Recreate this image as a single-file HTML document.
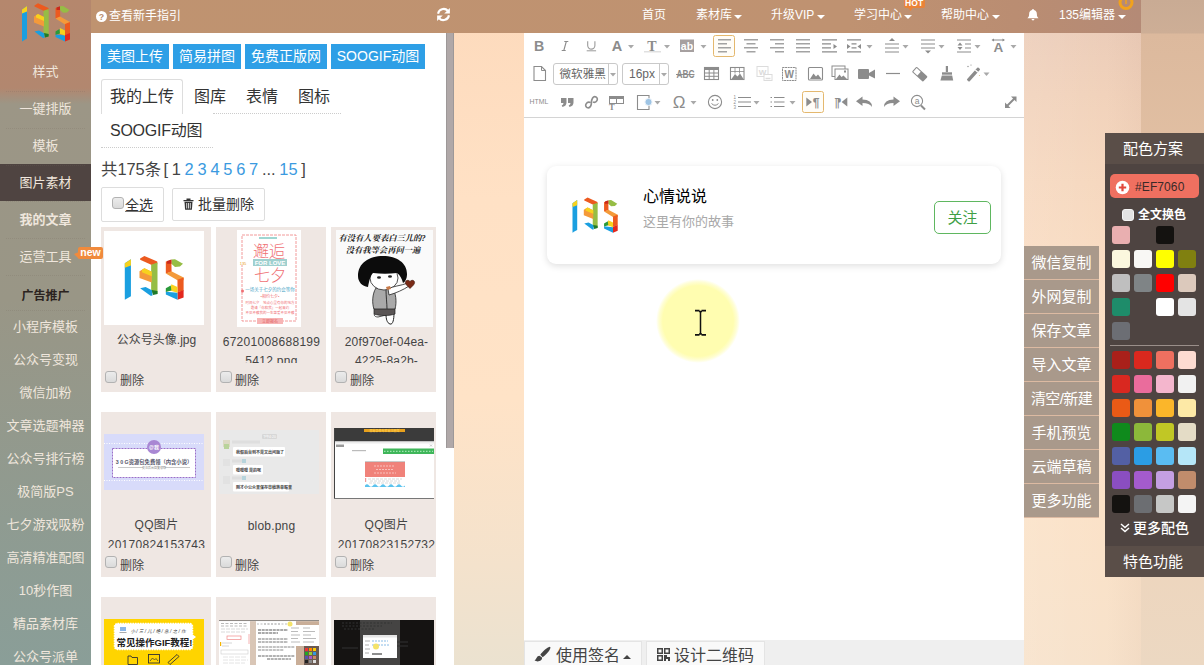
<!DOCTYPE html>
<html lang="zh-CN">
<head>
<meta charset="utf-8">
<title>135编辑器</title>
<style>
*{box-sizing:border-box;margin:0;padding:0}
html,body{width:1204px;height:665px;overflow:hidden}
body{font-family:"Liberation Sans","Noto Sans CJK SC",sans-serif;font-size:14px;color:#333;position:relative;
 background:linear-gradient(180deg,#fddabc 0%,#ffe1c5 30%,#ffe3c7 60%,#f4e2cc 85%,#ebe2d0 100%);}
.abs{position:absolute}
/* right-most strip */
#rstrip{left:1141px;top:0;width:63px;height:665px;background:linear-gradient(180deg,#c9ab94 0,#cdae96 33px,#dcb99d 34px,#e6c5a8 40%,#eed4bb 75%,#ecd8c2 100%)}
/* sidebar */
#side{left:0;top:0;width:91px;height:665px;background:linear-gradient(180deg,#b5876d 0,#b2876f 88px,#9c9686 104px,#999686 300px,#8f9b91 520px,#8a9e98 665px)}
#side .it{position:absolute;left:0;width:91px;text-align:center;color:#efe6dc;font-size:13px;line-height:20px;white-space:nowrap}
#side .it.s{font-size:15px}
#side .act{position:absolute;left:0;top:164px;width:91px;height:37px;background:#4f4441}
/* topbar */
#top{left:91px;top:0;width:1050px;height:33px;background:linear-gradient(90deg,#bf9370 0,#bf9271 72%,#ba8d72 88%,#b48a76 100%)}
#top .t{position:absolute;top:6px;color:#fff;font-size:12px;line-height:18px;white-space:nowrap}
.caret{display:block;width:0;height:0;border-left:4px solid transparent;border-right:4px solid transparent;border-top:4px solid #fff;margin:0}
/* left panel */
#lp{left:91px;top:33px;width:363.400px;height:632px;background:#fff;overflow:hidden}
#sb{left:446px;top:33px;width:8.400px;height:414.500px;background:#b0a8a8;border-left:1px solid #9d9898;border-right:1px solid #9d9898}
.bbtn{position:absolute;height:25px;background:#2e9fe6;color:#fff;font-size:14px;line-height:25px;text-align:center;white-space:nowrap}
.lk{color:#3a9ae0}
.tab{position:absolute;font-size:16px;line-height:22px;color:#333;white-space:nowrap}
.card{position:absolute;width:110px;height:165px;background:#efe7e3;overflow:hidden}
.card .im{position:absolute;left:3px;top:2.500px;width:100px;height:97px;overflow:hidden}
.card .nm{position:absolute;left:-7.500px;top:103.500px;width:126px;height:32px;overflow:hidden;text-align:center;font-size:12px;line-height:19px;color:#444;white-space:nowrap}
.card .del{position:absolute;left:19px;top:146px;font-size:12px;line-height:16px;color:#444}
.cb{position:absolute;width:12px;height:12px;border:1px solid #b2b2b2;border-radius:3px;background:linear-gradient(#ececec,#dadada)}
/* editor */
#ed{left:524px;top:33px;width:500px;height:632px;background:#fff}
#edbot{left:524px;top:640px;width:500px;height:25px;background:#efefef}
/* right buttons */
.rb{position:absolute;left:1024px;width:75px;height:34px;border-bottom:1px solid #dcbaa2;background:#a9998b;color:#fff;font-size:15px;line-height:33px;text-align:center;white-space:nowrap}
/* color panel */
#cp{left:1105px;top:133px;width:99px;height:444px;background:#4e4441}
.sw{position:absolute;width:18px;height:18px;border-radius:3px}
</style>
</head>
<body>
<div class="abs" style="left:1024px;top:33px;width:117px;height:632px;background:linear-gradient(90deg,rgba(255,255,255,.10),rgba(255,255,255,0) 70%,rgba(160,110,90,.06)),linear-gradient(180deg,#eccdb9 0,#f1d2bb 60px,#f6d8bf 150px,#fbdfc5 290px,#fbe2c8 480px,#f7e2cb 632px)"></div>
<div id="rstrip" class="abs"></div>
<div id="side" class="abs">
 <div class="act"></div>
 <svg class="abs" style="left:10px;top:0" width="80" height="50" viewBox="10 0 80 50">
  <polygon points="22,9.500 27,6 27,38.500 24.500,40 22,41.500" fill="#1a9fe0"/><polygon points="22,9.500 27,6 27,11.500 22,13.500" fill="#f7d21d"/>
  <polygon points="34.500,5.500 38,3.200 48.500,8 48.500,10.500 44,11 34.500,6.500" fill="#ec5a1f"/>
  <polygon points="43.500,10.800 48.700,9 48.700,36.500 43.500,35" fill="#96bd45"/>
  <polygon points="34,16.500 38,14 44,17 44,26.500 34,22.500" fill="#f49a3a"/><polygon points="38,14 44,17 44,21 36,17.500 36,15.300" fill="#f7d21d"/>
  <polygon points="34.500,31.500 39,30.500 44.500,33.500 44.500,38 43,38" fill="#1a9fe0"/>
  <polygon points="44,33 48.700,34 48.700,36.500 45,37.500" fill="#1f7a2a"/>
  <polygon points="60,6.200 63,6 69.500,10 67,12.500 63,12.800 60,10" fill="#96bd45"/>
  <polygon points="55.500,8 60,7 60.200,17 55.500,18.500" fill="#ec5a1f"/><polygon points="56.500,7.500 60,6.200 60,10 56.500,10" fill="#c9281c"/>
  <polygon points="55.500,18.500 60,16.500 70,22 70,24.500 65,24.500" fill="#f49a3a"/>
  <polygon points="65,24 70,22 70,33.500 65,35" fill="#ec5a1f"/>
  <polygon points="65,35 70,33 70,39.500 65,41.500" fill="#e3281e"/>
  <polygon points="55.500,34.500 65,35.500 65,41.500 55.500,37" fill="#1a9fe0"/>
  <polygon points="60,28 65,30.500 65,35.500 59,33.500" fill="#f7d21d"/>
  <polygon points="55.500,31.500 59.500,29 60,33.500 55.500,34.800" fill="#2a9a3a"/>
 </svg>
 <div class="it" style="top:62px;">样式</div>
 <div class="it" style="top:99px;">一键排版</div>
 <div class="it" style="top:136px;">模板</div>
 <div class="it" style="top:173px;">图片素材</div>
 <div class="it" style="top:210px;font-weight:bold;">我的文章</div>
 <div class="it" style="top:247px;">运营工具</div>
 <div class="it" style="top:286px;font-size:12px;font-weight:bold;color:#2b2320">广告推广</div>
 <div class="it" style="top:317px">小程序模板</div>
 <div class="it" style="top:350px">公众号变现</div>
 <div class="it" style="top:383px">微信加粉</div>
 <div class="it" style="top:416px">文章选题神器</div>
 <div class="it" style="top:449px">公众号排行榜</div>
 <div class="it" style="top:482px">极简版PS</div>
 <div class="it" style="top:515px">七夕游戏吸粉</div>
 <div class="it" style="top:548px">高清精准配图</div>
 <div class="it" style="top:581px">10秒作图</div>
 <div class="it" style="top:614px">精品素材库</div>
 <div class="it" style="top:647px">公众号派单</div>
 <div class="abs" style="left:6px;top:91px;width:79px;border-top:1px dotted rgba(120,105,95,.22)"></div>
 <div class="abs" style="left:6px;top:128px;width:79px;border-top:1px dotted rgba(120,105,95,.22)"></div>
 <div class="abs" style="left:6px;top:165px;width:79px;border-top:1px dotted rgba(120,105,95,.22)"></div>
 <div class="abs" style="left:6px;top:201px;width:79px;border-top:1px dotted rgba(120,105,95,.22)"></div>
 <div class="abs" style="left:6px;top:238px;width:79px;border-top:1px dotted rgba(120,105,95,.22)"></div>
 <div class="abs" style="left:6px;top:275px;width:79px;border-top:1px dotted rgba(120,105,95,.22)"></div>
 <div class="abs" style="left:6px;top:310px;width:79px;border-top:1px dotted rgba(120,105,95,.22)"></div>
</div>
<div id="top" class="abs">
 <svg class="abs" style="left:5px;top:10.500px" width="11" height="11" viewBox="0 0 10 10"><circle cx="5" cy="5" r="5" fill="#fff"/><text x="5" y="8.2" font-size="8" font-weight="bold" font-family="Liberation Sans,sans-serif" text-anchor="middle" fill="#b98d70">?</text></svg>
 <div class="t" style="left:18px;top:6.500px;font-size:12px">查看新手指引</div>
 <svg class="abs" style="left:345px;top:7px" width="15" height="15" viewBox="0 0 16 16"><path d="M2.2 7.2A6 6 0 0 1 12.6 4" fill="none" stroke="#fff" stroke-width="2.2"/><polygon points="14.8,1 14.8,7 8.8,7" fill="#fff"/><path d="M13.8 8.8A6 6 0 0 1 3.4 12" fill="none" stroke="#fff" stroke-width="2.2"/><polygon points="1.2,15 1.2,9 7.2,9" fill="#fff"/></svg>
 <div class="t" style="left:551px">首页</div>
 <div class="t" style="left:605px">素材库</div><span class="caret abs" style="left:643px;top:15px"></span>
 <div class="t" style="left:680px">升级VIP</div><span class="caret abs" style="left:726px;top:15px"></span>
 <div class="t" style="left:763px">学习中心</div><span class="caret abs" style="left:813px;top:15px"></span>
 <div class="t" style="left:850px">帮助中心</div><span class="caret abs" style="left:901px;top:15px"></span>
 <svg class="abs" style="left:936px;top:8px" width="12" height="14" viewBox="0 0 14 15"><path d="M7 0.5c.7 0 1.1.5 1.1 1.1C10.400 2.200 11.500 4 11.500 6.200c0 3 1 4 2 5H0.500c1-1 2-2 2-5C2.500 4 3.600 2.200 5.900 1.600 5.900 1 6.300.5 7 .5z" fill="#fff"/><path d="M5.300 12.300a1.700 1.700 0 0 0 3.400 0z" fill="#fff"/></svg>
 <div class="t" style="left:968px">135编辑器</div><span class="caret abs" style="left:1027px;top:15px"></span>
 <div class="abs" style="left:812.500px;top:-1px;width:21.500px;height:8.500px;background:#ea8338;color:#fff;font-size:8.500px;line-height:9px;font-weight:bold;text-align:center;border-radius:2px;letter-spacing:.2px">HOT</div>
 <div class="abs" style="left:817px;top:7px;width:0;height:0;border-left:2px solid transparent;border-top:4.500px solid #ea8338;border-right:4px solid transparent;transform:skewX(20deg)"></div>
 <svg class="abs" style="left:1027px;top:0" width="16" height="12" viewBox="0 0 16 12"><circle cx="8" cy="2.500" r="6" fill="none" stroke="#f2a21c" stroke-width="3"/><path d="M8 0v4" stroke="#f2a21c" stroke-width="1.500"/></svg>
</div>
<div id="lp" class="abs">
 <div class="bbtn" style="left:10px;top:11px;width:68px">美图上传</div>
 <div class="bbtn" style="left:82px;top:11px;width:68px">简易拼图</div>
 <div class="bbtn" style="left:154px;top:11px;width:82px">免费正版网</div>
 <div class="bbtn" style="left:240px;top:11px;width:94px">SOOGIF动图</div>

 <div class="abs" style="left:10px;top:46px;width:82px;height:35px;border:1px solid #ddd;border-bottom:none;border-radius:3px 3px 0 0"></div>
 <div class="abs" style="left:122px;top:80px;width:128px;border-top:1px dotted #ccc"></div>
 <div class="abs" style="left:10px;top:114px;width:112px;border-top:1px dotted #ccc"></div>
 <div class="tab" style="left:19px;top:53px">我的上传</div>
 <div class="tab" style="left:103px;top:53px">图库</div>
 <div class="tab" style="left:155px;top:53px">表情</div>
 <div class="tab" style="left:207px;top:53px">图标</div>
 <div class="tab" style="left:19px;top:87px;letter-spacing:-.25px">SOOGIF动图</div>

 <div class="abs" style="left:10px;top:125px;font-size:16.400px;line-height:22px;color:#444;white-space:nowrap;word-spacing:-.8px">共175条<span style="margin-left:-1.500px"> </span>[ 1 <span class="lk">2</span> <span class="lk">3</span> <span class="lk">4</span> <span class="lk">5</span> <span class="lk">6</span> <span class="lk">7</span> ... <span class="lk">15</span> ]</div>

 <div class="abs" style="left:10px;top:154px;width:63px;height:35px;border:1px solid #ddd;border-radius:2px"></div>
 <div class="cb" style="left:21px;top:164px"></div>
 <div class="abs" style="left:34px;top:162px;font-size:14px;line-height:20px;color:#333;text-decoration:underline;text-decoration-color:#777">全选</div>
 <div class="abs" style="left:81px;top:155px;width:93px;height:33px;border:1px solid #ddd;border-radius:2px"></div>
 <svg class="abs" style="left:92px;top:165px" width="11" height="12" viewBox="0 0 11 12"><path d="M0.500 2h10v1.300H0.500zM3.500 0.500h4v1.500h-4z" fill="#333"/><path d="M1.500 3.800h8l-.6 8H2.100z" fill="#333"/><path d="M3.700 5v5.500M5.500 5v5.500M7.300 5v5.500" stroke="#fff" stroke-width=".8"/></svg>
 <div class="abs" style="left:107px;top:161px;font-size:14px;line-height:20px;color:#333">批量删除</div>
<div class="card" style="left:10px;top:194px;width:110px"><div class="im"><svg width="100" height="94" viewBox="0 0 100 94" style="position:absolute;left:0;top:1.500px;background:#fff"><g transform="translate(20.800,25) scale(1.225,1.140) translate(-22,-3.200)"><polygon points="22,9.500 27,6 27,38.500 24.500,40 22,41.500" fill="#1a9fe0"/><polygon points="22,9.500 27,6 27,11.500 22,13.500" fill="#f7d21d"/>
  <polygon points="34.500,5.500 38,3.200 48.500,8 48.500,10.500 44,11 34.500,6.500" fill="#ec5a1f"/>
  <polygon points="43.500,10.800 48.700,9 48.700,36.500 43.500,35" fill="#96bd45"/>
  <polygon points="34,16.500 38,14 44,17 44,26.500 34,22.500" fill="#f49a3a"/><polygon points="38,14 44,17 44,21 36,17.500 36,15.300" fill="#f7d21d"/>
  <polygon points="34.500,31.500 39,30.500 44.500,33.500 44.500,38 43,38" fill="#1a9fe0"/>
  <polygon points="44,33 48.700,34 48.700,36.500 45,37.500" fill="#1f7a2a"/>
  <polygon points="60,6.200 63,6 69.500,10 67,12.500 63,12.800 60,10" fill="#96bd45"/>
  <polygon points="55.500,8 60,7 60.200,17 55.500,18.500" fill="#ec5a1f"/><polygon points="56.500,7.500 60,6.200 60,10 56.500,10" fill="#c9281c"/>
  <polygon points="55.500,18.500 60,16.500 70,22 70,24.500 65,24.500" fill="#f49a3a"/>
  <polygon points="65,24 70,22 70,33.500 65,35" fill="#ec5a1f"/>
  <polygon points="65,35 70,33 70,39.500 65,41.500" fill="#e3281e"/>
  <polygon points="55.500,34.500 65,35.500 65,41.500 55.500,37" fill="#1a9fe0"/>
  <polygon points="60,28 65,30.500 65,35.500 59,33.500" fill="#f7d21d"/>
  <polygon points="55.500,31.500 59.500,29 60,33.500 55.500,34.800" fill="#2a9a3a"/></g></svg></div><div class="nm" style="">公众号头像.jpg</div><div class="cb" style="left:4px;top:144px"></div><div class="del">删除</div></div>
<div class="card" style="left:125px;top:194px;width:110px"><div class="im"><svg width="64" height="97" viewBox="0 0 64 97" style="position:absolute;left:18px;top:0;background:#fff">
<rect x="5" y="5" width="54" height="86" fill="none" stroke="#f29a9a" stroke-width="1" stroke-dasharray="3 1"/>
<rect x="22" y="7" width="18" height="2" fill="#9fd6d2"/>
<text x="32" y="27" font-size="16" font-weight="300" text-anchor="middle" fill="#ef6f74" font-family="Liberation Sans,Noto Sans CJK SC,sans-serif">邂逅</text>
<rect x="16" y="29" width="34" height="7" fill="#9fd0cf"/>
<text x="33" y="35" font-size="6" text-anchor="middle" fill="#fff" font-family="Liberation Sans,sans-serif" font-weight="bold">FOR LOVE</text>
<text x="33" y="51" font-size="16" font-weight="300" text-anchor="middle" fill="#ef6f74" font-family="Liberation Sans,Noto Sans CJK SC,sans-serif">七夕</text>
<rect x="3" y="30" width="6" height="5" fill="#fff"/><text x="6" y="34.500" font-size="4" text-anchor="middle" fill="#e9a21c" font-family="Liberation Sans,sans-serif">135</text>
<text x="33" y="61" font-size="4.500" text-anchor="middle" fill="#4aa6c8" font-family="Liberation Sans,Noto Sans CJK SC,sans-serif">一场关于七夕的约会等你</text>
<text x="33" y="68" font-size="4" text-anchor="middle" fill="#ef6f74" font-family="Liberation Sans,Noto Sans CJK SC,sans-serif">•相约七夕•</text>
<text x="33" y="74" font-size="3.500" text-anchor="middle" fill="#ef6f74" font-family="Liberation Sans,Noto Sans CJK SC,sans-serif">时间七夕　地点心里有你的地方</text>
<text x="33" y="79" font-size="3.500" text-anchor="middle" fill="#ef6f74" font-family="Liberation Sans,Noto Sans CJK SC,sans-serif">邀请「你和我」一起来约</text>
<text x="33" y="84" font-size="3.500" text-anchor="middle" fill="#ef6f74" font-family="Liberation Sans,Noto Sans CJK SC,sans-serif">不见不散我的一生挚爱不见不散</text>
<rect x="20" y="88" width="26" height="6" fill="#f7b5b5"/><text x="33" y="92.500" font-size="4" text-anchor="middle" fill="#e05d62" font-family="Liberation Sans,Noto Sans CJK SC,sans-serif">立即报名</text>
<circle cx="5.500" cy="61" r="1.500" fill="#ef6f74"/>
</svg></div><div class="nm" style="letter-spacing:.3px;padding-top:2px">67201008688199<br>5412.png</div><div class="cb" style="left:4px;top:144px"></div><div class="del">删除</div></div>
<div class="card" style="left:240px;top:194px;width:105px"><div class="im"><svg width="97" height="97" viewBox="0 0 97 97" style="position:absolute;left:2px;top:0;background:#fafafa">
<text x="46" y="10.800" font-size="8.300" font-weight="bold" text-anchor="middle" fill="#1a1a1a" font-style="italic" font-family="Liberation Serif,Noto Serif CJK SC,serif">有没有人要表白三儿的?</text>
<text x="47" y="22.800" font-size="8.300" font-weight="bold" text-anchor="middle" fill="#1a1a1a" font-style="italic" font-family="Liberation Serif,Noto Serif CJK SC,serif">没有我等会再问一遍</text>
<path d="M50 84c0 5 1 9 4 10s4-5 4-11z" fill="#fff" stroke="#222" stroke-width="1"/>
<path d="M40 82c-3 2-2 5 2 5l8-2z" fill="#fff" stroke="#222" stroke-width=".8"/>
<path d="M38 78h21v6c-6 2-15 2-21 0z" fill="#5a5555" stroke="#222" stroke-width=".7"/>
<path d="M40 58c-4 6-4 16-2 21h21c2-7 1-16-3-22z" fill="#a9a9a9" stroke="#222" stroke-width=".8"/>
<path d="M50 60c0 6 1 14 1 19" stroke="#333" stroke-width="1" fill="none"/>
<ellipse cx="48" cy="48" rx="14" ry="12" fill="#fff" stroke="#222" stroke-width=".8"/>
<path d="M22 46c0-13 11-20 25-20s24 7 24 18c0 5-2 8-4 9-1-4-3-8-6-10-8 1-16 1-24 0-3 3-4 9-5 14-6-1-10-5-10-11z" fill="#0c0c0c"/>
<ellipse cx="43" cy="47.500" rx="2" ry="1.200" fill="#222"/><ellipse cx="54" cy="46.500" rx="2" ry="1.200" fill="#222"/>
<path d="M52 59c5-3 12-3 20-6l1 3c-6 4-13 7-20 9z" fill="#fff" stroke="#222" stroke-width=".8"/>
<path d="M50 57l4-1 1 3-4 1z" fill="#c77a4a"/>
<path d="M74 51.500c-2.500-3-6.500 0-3.500 3.500l3.500 3.500 3.500-3.500c3-3.500-1-6.500-3.500-3.500z" fill="#7a2a16" stroke="#3a1208" stroke-width=".6"/>
</svg></div><div class="nm" style="padding-top:2px;letter-spacing:.15px">20f970ef-04ea-<br>4225-8a2b-</div><div class="cb" style="left:4px;top:144px"></div><div class="del">删除</div></div>
<div class="card" style="left:10px;top:379px;width:110px"><div class="im"><svg width="100" height="56" viewBox="0 0 100 56" style="position:absolute;left:0;top:19.500px;background:#d8dbfa">
<path d="M0 9.500h100M0 46.500h100" stroke="#fff" stroke-width="1" stroke-dasharray="1 1.500"/>
<rect x="8.500" y="14.500" width="83" height="29" fill="#fff" stroke="#9a6fc9" stroke-width="1" stroke-dasharray="2 1"/>
<circle cx="50" cy="13" r="7" fill="#a987d3"/>
<text x="50" y="15.300" font-size="5" font-weight="bold" text-anchor="middle" fill="#fff" font-family="Liberation Sans,Noto Sans CJK SC,sans-serif">@我</text>
<text x="50" y="29.500" font-size="5.300" font-weight="bold" text-anchor="middle" fill="#55556a" font-family="Liberation Sans,Noto Sans CJK SC,sans-serif">3 0 G资源包免费领（内含小说）</text>
<path d="M14 33.500h72" stroke="#bbb" stroke-width=".8"/>
<rect x="39" y="32" width="22" height="3" fill="#fff"/>
<text x="50" y="35" font-size="3" text-anchor="middle" fill="#888" font-family="Liberation Sans,Noto Sans CJK SC,sans-serif">关注后台回复领取</text>
</svg></div><div class="nm" style="letter-spacing:.3px">QQ图片<br><span style="position:relative;top:1.500px">20170824153743</span></div><div class="cb" style="left:4px;top:144px"></div><div class="del">删除</div></div>
<div class="card" style="left:125px;top:379px;width:110px"><div class="im"><svg width="101" height="64" viewBox="0 0 101 64" style="position:absolute;left:-0.500px;top:15.700px;background:#e9e9e9">
<rect x="43" y="4" width="15" height="5" rx="1" fill="#d7d7d7"/><text x="50.500" y="8" font-size="3.500" text-anchor="middle" fill="#fff" font-family="Liberation Sans,sans-serif">下午4:20</text>
<rect x="4" y="10" width="7" height="7" fill="#dcd9c3"/><rect x="5" y="14" width="5" height="5" fill="#b9d39a"/><rect x="13" y="10.500" width="28" height="3" fill="#dedede"/>
<rect x="14" y="17" width="52" height="9.500" rx="1" fill="#fff"/>
<text x="17" y="24" font-size="4" fill="#444" font-family="Liberation Sans,Noto Sans CJK SC,sans-serif" font-weight="bold">我假后台到不是又出问题了</text>
<rect x="4" y="29" width="7" height="7" fill="#e2e2e2"/><rect x="13" y="29.500" width="10" height="3" fill="#dedede"/><rect x="23" y="29" width="4" height="4" fill="#b7d4dc"/>
<rect x="14" y="35" width="30" height="9.500" rx="1" fill="#fff"/>
<text x="17" y="42" font-size="4" fill="#444" font-family="Liberation Sans,Noto Sans CJK SC,sans-serif" font-weight="bold">嗯嗯嗯 是的呢</text>
<rect x="4" y="46" width="7" height="8" fill="#e2e2e2"/><rect x="13" y="46.500" width="10" height="3" fill="#dedede"/><rect x="23" y="46" width="4" height="4" fill="#b7d4dc"/>
<rect x="14" y="52" width="56" height="9.500" rx="1" fill="#fff"/>
<text x="17" y="59" font-size="4" fill="#444" font-family="Liberation Sans,Noto Sans CJK SC,sans-serif" font-weight="bold">刚才小公众里保存草稿落单服里</text>
</svg></div><div class="nm" style="padding-top:1.500px;letter-spacing:.2px">blob.png</div><div class="cb" style="left:4px;top:144px"></div><div class="del">删除</div></div>
<div class="card" style="left:240px;top:379px;width:105px"><div class="im"><svg width="100" height="71" viewBox="0 0 100 71" style="position:absolute;left:0;top:13px;background:#fff">
<rect x="0" y="0" width="100" height="13.500" fill="#3b3b3b"/>
<rect x="30" y="1" width="41" height="3" fill="#e8a11d"/>
<text x="50.500" y="3.700" font-size="3" text-anchor="middle" fill="#ffd45a" font-family="Liberation Sans,Noto Sans CJK SC,sans-serif">屏幕录像专家未注册版</text>
<rect x="0" y="13.500" width="100" height="2" fill="#ececec"/>
<rect x="0" y="0" width="1" height="71" fill="#444"/><rect x="0" y="70" width="100" height="1" fill="#777"/>
<rect x="2" y="16.500" width="8" height="2.500" fill="#999"/><path d="M96 16.500l2 2m0-2l-2 2" stroke="#999" stroke-width=".5"/>
<rect x="18" y="22" width="14" height="1.200" fill="#bbb"/>
<rect x="49" y="20.500" width="51" height="5.500" fill="#3fb65a"/>
<path d="M50 23.300h49" stroke="#9fe3ae" stroke-width="1.200" stroke-dasharray="1.500 1.500"/>
<rect x="31" y="34" width="40" height="15" fill="#f0827a"/>
<path d="M40 38h20M42 41.500h17M40 45h22" stroke="#f9c0bb" stroke-width="1.200" stroke-dasharray="2 1"/>
<rect x="31" y="33.500" width="40" height=".6" fill="#999"/>
<path d="M34 51h34M36 53h30M35 55h32" stroke="#d6d6d6" stroke-width=".9" stroke-dasharray="3 1"/>
<rect x="31" y="50" width="1.200" height="4" fill="#e99"/>
<path d="M31 57.500q2-2.500 4 0t4 0 4 0 4 0 4 0 4 0 4 0 4 0 4 0 4 0v1.500h-40z" fill="#5bc3ee"/>
</svg></div><div class="nm" style="letter-spacing:.3px">QQ图片<br><span style="position:relative;top:1.500px">20170823152732</span></div><div class="cb" style="left:4px;top:144px"></div><div class="del">删除</div></div>
<div class="card" style="left:10px;top:564px;width:110px"><div class="im"><svg width="100" height="46" viewBox="0 0 100 46" style="position:absolute;left:0;top:19.500px;background:#ffd400">
<rect x="10.500" y="4.500" width="78" height="26" rx="3" fill="#fff" stroke="#fff" stroke-width="1.500" stroke-dasharray="1.500 1"/>
<polygon points="88,15 92,18 88,21" fill="#fff"/>
<rect x="16" y="8" width="6" height="4" fill="#8ab6e8"/><rect x="15.500" y="13" width="7" height="1" fill="#aaa"/>
<text x="54" y="13.500" font-size="4.600" text-anchor="middle" fill="#333" font-style="italic" font-family="Liberation Sans,Noto Sans CJK SC,sans-serif">小 / 三 / 儿 / 绝 / 急 / 之 / 作</text>
<text x="50.500" y="27" font-size="9.500" font-weight="bold" text-anchor="middle" fill="#222" font-family="Liberation Sans,Noto Sans CJK SC,sans-serif">常见操作GIF教程!</text>
<path d="M24 37h3l1 1.500h5.500v7h-9.500z" fill="none" stroke="#333" stroke-width=".9"/>
<rect x="44.500" y="35.500" width="11" height="8.500" fill="none" stroke="#333" stroke-width=".9"/><path d="M46 42l2.500-3 2 2 1.500-1.500 2 2.500" fill="none" stroke="#333" stroke-width=".7"/>
<path d="M64 43.500l9-8 2 2-9 8z" fill="none" stroke="#333" stroke-width=".9"/>
</svg></div></div>
<div class="card" style="left:125px;top:564px;width:110px"><div class="im"><svg width="101" height="46" viewBox="0 0 101 46" style="position:absolute;left:-0.500px;top:20.500px;background:#fdfdfd">
<rect x="0" y="0" width="101" height="1.200" fill="#8f8a86"/>
<rect x="0" y="1.200" width="31" height="45" fill="#fff"/>
<path d="M2 3.500h26M2 6h26" stroke="#b9b9b9" stroke-width="1" stroke-dasharray="3 1.500"/>
<path d="M2 9h27M2 12h24" stroke="#cfcfcf" stroke-width=".8" stroke-dasharray="4 1"/>
<rect x="8" y="16" width="14" height="3.500" fill="none" stroke="#f08a8a" stroke-width=".7"/>
<path d="M30 14v10" stroke="#f3a0a0" stroke-width=".8"/>
<rect x="1" y="22" width="1.200" height="4" fill="#f5b400"/>
<path d="M3 23h10M3 26h7" stroke="#ccc" stroke-width=".8"/>
<rect x="2" y="30" width="27" height="4" fill="none" stroke="#ccc" stroke-width=".6"/>
<path d="M4 37h24M4 40h25M4 43h22" stroke="#ddd" stroke-width=".8" stroke-dasharray="5 1"/>
<rect x="31" y="1.200" width="6" height="45" fill="#d9c6b6"/>
<rect x="37" y="1.200" width="40" height="45" fill="#fff"/>
<path d="M38 4h24M45 4h25" stroke="#bbb" stroke-width="1" stroke-dasharray="2 1.500"/>
<path d="M39 10h36M39 13h20" stroke="#555" stroke-width="1.100" stroke-dasharray="3 .7"/>
<path d="M39 19h37M39 22h30" stroke="#777" stroke-width="1" stroke-dasharray="3 .7"/>
<path d="M39 27h37M39 30h26" stroke="#888" stroke-width="1" stroke-dasharray="3 .7"/>
<path d="M39 36h37M48 39h24" stroke="#666" stroke-width="1" stroke-dasharray="3 .7"/>
<rect x="77" y="1.200" width="24" height="45" fill="#c9ae98"/>
<rect x="85" y="26" width="16" height="20" fill="#6b5a52"/>
<rect x="69" y="5" width="31" height="21" fill="#fff"/>
<path d="M72 8h8M72 11.500h7M72 15h9M72 18.500h7M72 22h9M84 8h7M84 11.500h12M84 15h8M84 18.500h13M84 22h11" stroke="#aaa" stroke-width=".8"/>
<circle cx="71" cy="4" r="2.500" fill="#f4e36a"/>
<g><rect x="86" y="28" width="3" height="3" fill="#e33"/><rect x="90" y="28" width="3" height="3" fill="#f80"/><rect x="94" y="28" width="3" height="3" fill="#fc0"/>
<rect x="86" y="32" width="3" height="3" fill="#2a2"/><rect x="90" y="32" width="3" height="3" fill="#9c3"/><rect x="94" y="32" width="3" height="3" fill="#39d"/>
<rect x="86" y="36" width="3" height="3" fill="#55a"/><rect x="90" y="36" width="3" height="3" fill="#a5c"/><rect x="94" y="36" width="3" height="3" fill="#c86"/>
<rect x="86" y="40" width="3" height="3" fill="#222"/><rect x="90" y="40" width="3" height="3" fill="#888"/><rect x="94" y="40" width="3" height="3" fill="#ddd"/></g>
</svg></div></div>
<div class="card" style="left:240px;top:564px;width:105px"><div class="im"><svg width="100" height="46" viewBox="0 0 100 46" style="position:absolute;left:0;top:20.500px;background:#151312">
<rect x="26" y="0" width="40" height="46" fill="#454443"/>
<path d="M8 3h50M8 6h40M10 9h30" stroke="#333" stroke-width="1" stroke-dasharray="2 1.500"/>
<path d="M60 22h14M60 26h14M8 28h16" stroke="#333" stroke-width="1"/>
<rect x="29" y="15" width="34" height="23" fill="#fff"/>
<rect x="29" y="15" width="34" height="2.500" fill="#e6e6e6"/>
<path d="M31 21h5M31 25h4M31 29h5M31 33h4" stroke="#999" stroke-width=".8"/>
<path d="M38 21h16M38 25h18" stroke="#6aa9e0" stroke-width=".8" stroke-dasharray="2 1"/>
<circle cx="42" cy="26.500" r="3" fill="#f4e36a"/>
<path d="M38 34h10" stroke="#444" stroke-width="1.200"/>
</svg></div></div>
</div>
<div id="sb" class="abs"></div>
<div id="ed" class="abs"></div>
<svg class="abs" style="left:524px;top:33px" width="500" height="85" viewBox="524 33 500 85"><text x="534" y="50.800" font-size="14.200" font-weight="bold" fill="#8c8c8c" font-family="Liberation Sans,Noto Sans CJK SC,sans-serif">B</text><path d="M566.300 41.500L563.800 50.500M564.300 41.500h4M561.700 50.500h4" stroke="#8c8c8c" stroke-width="1.100" fill="none"/><path d="M587.700 41.300v4.200a3.600 3.600 0 0 0 7.200 0V41.300" fill="none" stroke="#9a9a9a" stroke-width="1.100"/><path d="M586.700 50.800h9.400" stroke="#9a9a9a" stroke-width="1"/><text x="611.800" y="50.800" font-size="14.500" font-weight="bold" fill="#8c8c8c" font-family="Liberation Sans,Noto Sans CJK SC,sans-serif">A</text><polygon points="628,45.0 634,45.0 631,48.5" fill="#a9a9a9"/><text x="647.300" y="50.600" font-size="14" font-weight="bold" fill="#8c8c8c" font-family="Liberation Serif,serif">T</text><path d="M644 51.800h17" stroke="#d8d8d8" stroke-width="1.200"/><polygon points="664,45.0 670,45.0 667,48.5" fill="#a9a9a9"/><rect x="680" y="39.500" width="14" height="12.500" fill="#a6a0a0"/><text x="687" y="50" font-size="10.500" font-weight="bold" text-anchor="middle" fill="#fff" font-family="Liberation Sans,Noto Sans CJK SC,sans-serif">ab</text><polygon points="700.5,45.0 706.5,45.0 703.5,48.5" fill="#a9a9a9"/><rect x="713.500" y="35.500" width="21" height="21" rx="2" fill="#fffdf8" stroke="#e4b86e" stroke-width="1"/><path d="M718 39.8H731" stroke="#8c8c8c" stroke-width="1.2"/><path d="M718 43.8H727" stroke="#8c8c8c" stroke-width="1.2"/><path d="M718 47.8H731" stroke="#8c8c8c" stroke-width="1.2"/><path d="M718 51.8H727" stroke="#8c8c8c" stroke-width="1.2"/><path d="M744 39.8H758" stroke="#8c8c8c" stroke-width="1.2"/><path d="M746.5 43.8H755.5" stroke="#8c8c8c" stroke-width="1.2"/><path d="M744 47.8H758" stroke="#8c8c8c" stroke-width="1.2"/><path d="M746.5 51.8H755.5" stroke="#8c8c8c" stroke-width="1.2"/><path d="M770 39.8H784" stroke="#8c8c8c" stroke-width="1.2"/><path d="M775 43.8H784" stroke="#8c8c8c" stroke-width="1.2"/><path d="M770 47.8H784" stroke="#8c8c8c" stroke-width="1.2"/><path d="M775 51.8H784" stroke="#8c8c8c" stroke-width="1.2"/><path d="M796 39.8H810" stroke="#8c8c8c" stroke-width="1.2"/><path d="M796 43.8H810" stroke="#8c8c8c" stroke-width="1.2"/><path d="M796 47.8H810" stroke="#8c8c8c" stroke-width="1.2"/><path d="M796 51.8H810" stroke="#8c8c8c" stroke-width="1.2"/><path d="M822 39.800h15M822 43.800h9M822 47.800h9M822 51.800h15" stroke="#8c8c8c" stroke-width="1.200"/><polygon points="833.500,44 837,46.500 833.500,49" fill="#8c8c8c"/><path d="M847 39.800h14M851.500 43.800h5M851.500 47.800h5M847 51.800h14" stroke="#8c8c8c" stroke-width="1.200"/><polygon points="847,44 850.500,46.500 847,49" fill="#8c8c8c"/><polygon points="861,44 857.500,46.500 861,49" fill="#8c8c8c"/><polygon points="866.5,45.0 872.5,45.0 869.5,48.5" fill="#a9a9a9"/><polygon points="889,41 895,41 892,38" fill="#8c8c8c"/><path d="M885 44h14M885 48h14M885 52h14" stroke="#8c8c8c" stroke-width="1.200"/><polygon points="902.5,45.0 908.5,45.0 905.5,48.5" fill="#a9a9a9"/><path d="M921 40h14M921 44h14M921 48h14" stroke="#8c8c8c" stroke-width="1.200"/><polygon points="925,50.500 931,50.500 928,53.500" fill="#8c8c8c"/><polygon points="938.5,45.0 944.5,45.0 941.5,48.5" fill="#a9a9a9"/><path d="M957 40h14M965 44h6M965 48h6M957 52h14" stroke="#8c8c8c" stroke-width="1.200"/><polygon points="957.500,45.500 962.500,45.500 960,42.500" fill="#8c8c8c"/><polygon points="957.500,47 962.500,47 960,50" fill="#8c8c8c"/><polygon points="974.5,45.0 980.5,45.0 977.5,48.5" fill="#a9a9a9"/><text x="998.300" y="52" font-size="13.500" font-weight="bold" text-anchor="middle" fill="#8c8c8c" font-family="Liberation Sans,Noto Sans CJK SC,sans-serif">A</text><path d="M992.500 40h11.500" stroke="#8c8c8c" stroke-width="1"/><polygon points="991.500,40 994,38.500 994,41.500" fill="#8c8c8c"/><polygon points="1005,40 1002.500,38.500 1002.500,41.500" fill="#8c8c8c"/><polygon points="1010.5,45.0 1016.5,45.0 1013.5,48.5" fill="#a9a9a9"/><path d="M534 66.500h7.500l4 4v10h-11.500z" fill="#fff" stroke="#8c8c8c" stroke-width="1.100"/><path d="M541.500 66.500v4h4" fill="none" stroke="#8c8c8c" stroke-width="1"/><rect x="553.500" y="63.500" width="64" height="21" rx="2.500" fill="#fff" stroke="#c9c9c9"/><path d="M608.500 64v20" stroke="#c9c9c9"/><text x="559.500" y="78.200" font-size="11.600" fill="#666" font-family="Liberation Sans,Noto Sans CJK SC,sans-serif">微软雅黑</text><polygon points="610,73.0 616,73.0 613,76.5" fill="#a9a9a9"/><rect x="622.500" y="63.500" width="46" height="21" rx="2.500" fill="#fff" stroke="#c9c9c9"/><path d="M659.500 64v20" stroke="#c9c9c9"/><text x="629" y="78.200" font-size="12" fill="#666" font-family="Liberation Sans,Noto Sans CJK SC,sans-serif">16px</text><polygon points="661,73.0 667,73.0 664,76.5" fill="#a9a9a9"/><text x="676.500" y="78.300" font-size="11" font-weight="bold" fill="#8c8c8c" textLength="18" lengthAdjust="spacingAndGlyphs" font-family="Liberation Sans,sans-serif">ABC</text><path d="M676 74.500h18.500" stroke="#8c8c8c" stroke-width="1"/><rect x="704.500" y="67.500" width="14" height="12" fill="#fff" stroke="#8c8c8c" stroke-width="1.100"/><rect x="704.500" y="67.500" width="14" height="2.500" fill="#8c8c8c"/><path d="M704.500 73h14M704.500 76.300h14M709.200 69v10.500M713.900 69v10.500" stroke="#8c8c8c" stroke-width="1"/><rect x="730.500" y="67.500" width="13.500" height="12" fill="#fff" stroke="#8c8c8c" stroke-width="1.100"/><path d="M730.500 71.500h13.500M735 67.500v6M739.500 67.500v6" stroke="#8c8c8c" stroke-width=".8"/><polygon points="731.500,79 735,74 737.500,76.500 740,73.500 743.500,79" fill="#8c8c8c"/><rect x="757" y="66.500" width="11" height="10" fill="#fff" stroke="#dcdcdc"/><text x="762.500" y="75" font-size="8" font-weight="bold" text-anchor="middle" fill="#dadada" font-family="Liberation Sans,Noto Sans CJK SC,sans-serif">W</text><rect x="764" y="74.500" width="8" height="6" fill="#fff" stroke="#dcdcdc"/><path d="M765.500 78.500h5" stroke="#dcdcdc" stroke-width="1.500"/><rect x="782.500" y="67.500" width="13.500" height="13" fill="#fff" stroke="#8c8c8c" stroke-width="1" stroke-dasharray="2 .6"/><text x="789.300" y="78" font-size="10" font-weight="bold" text-anchor="middle" fill="#8c8c8c" font-family="Liberation Sans,Noto Sans CJK SC,sans-serif">W</text><rect x="808.500" y="67.500" width="14" height="12.500" rx="1" fill="#fff" stroke="#8c8c8c" stroke-width="1.100"/><polygon points="810,79 813.500,73.500 816,76.500 818,74.500 821.500,79" fill="#8c8c8c"/><rect x="832" y="66" width="13" height="10.500" fill="#fff" stroke="#8c8c8c" stroke-width="1"/><rect x="835" y="69" width="13" height="10.500" fill="#fff" stroke="#8c8c8c" stroke-width="1"/><polygon points="836,79 839.500,74.500 841.500,77 843.500,75.500 847,79" fill="#8c8c8c"/><rect x="844" y="70.500" width="2" height="2" fill="#8c8c8c"/><rect x="858" y="69" width="11" height="10" rx="1" fill="#8c8c8c"/><polygon points="869,73 875,69.500 875,78.500 869,75.500" fill="#8c8c8c"/><path d="M886 73.500h14" stroke="#8c8c8c" stroke-width="1.200"/><g transform="rotate(42 920 74)"><rect x="912.500" y="70.800" width="15" height="7" rx="1" fill="#8c8c8c"/><rect x="913.500" y="71.800" width="5.500" height="5" fill="#fff"/></g><path d="M945.800 66h2.200v6h-2.200z" fill="#8c8c8c"/><path d="M942 72.300h10v2.400h-10z" fill="#8c8c8c"/><path d="M941.800 75.500h10.400l1 5h-12.800z" fill="#8c8c8c"/><g transform="rotate(-48 973.500 74.500)"><rect x="965" y="72.800" width="17" height="3.400" rx="1" fill="#8c8c8c"/><rect x="977.500" y="72.800" width="1.200" height="3.400" fill="#fff"/></g><circle cx="968" cy="66.500" r=".7" fill="#8c8c8c"/><circle cx="971" cy="65" r=".6" fill="#8c8c8c"/><circle cx="979.500" cy="75.500" r=".6" fill="#d7c08a"/><polygon points="983.5,72.5 989.5,72.5 986.5,76" fill="#a9a9a9"/><text x="529.500" y="104" font-size="6.900" fill="#8c8c8c" font-family="Liberation Sans,Noto Sans CJK SC,sans-serif">HTML</text><path d="M561 98h5.500v4.500q0 3.500-4 4.500l-.8-1.500q1.800-.8 1.800-2.500h-2.500zM568 98h5.500v4.500q0 3.500-4 4.500l-.8-1.500q1.800-.8 1.800-2.500h-2.500z" fill="#8c8c8c"/><path d="M590.500 102.500c-4-1.500-6.500 3.500-3.500 5 3.500 1.500 4.500-3 4.500-5.500s1.500-6.500 4.500-5c3 1.500 .5 6.500-3 5" fill="none" stroke="#8c8c8c" stroke-width="1.600"/><rect x="609.500" y="96.500" width="14" height="7" fill="#fff" stroke="#8c8c8c" stroke-width="1"/><rect x="609.500" y="96.500" width="14" height="2.500" fill="#8c8c8c"/><path d="M616.500 99v4.500" stroke="#8c8c8c"/><text x="609" y="110.300" font-size="8.500" font-weight="bold" fill="#8c8c8c" font-family="Liberation Serif,serif">T</text><path d="M637.500 95.500h11.500v14h-11.500z" fill="#fff" stroke="#8c8c8c" stroke-width="1.100"/><circle cx="648.500" cy="102" r="3.600" fill="#9ec4e4" stroke="#eef4fa" stroke-width="1"/><polygon points="654.5,101.0 660.5,101.0 657.5,104.5" fill="#a9a9a9"/><text x="679" y="107.600" font-size="17" text-anchor="middle" fill="#8c8c8c" font-family="Liberation Sans,sans-serif">Ω</text><polygon points="690.5,101.0 696.5,101.0 693.5,104.5" fill="#a9a9a9"/><circle cx="715" cy="102" r="6.600" fill="#fff" stroke="#8c8c8c" stroke-width="1.100"/><circle cx="712.700" cy="100" r=".9" fill="#8c8c8c"/><circle cx="717.300" cy="100" r=".9" fill="#8c8c8c"/><path d="M711.500 103.500q3.500 3.500 7 0" fill="none" stroke="#8c8c8c" stroke-width="1"/><path d="M738 97.500h13M738 102h13M738 106.500h13" stroke="#8c8c8c" stroke-width="1.200"/><text x="733.500" y="99" font-size="4.500" fill="#8c8c8c" font-family="Liberation Sans,Noto Sans CJK SC,sans-serif">1</text><text x="733.500" y="103.800" font-size="4.500" fill="#8c8c8c" font-family="Liberation Sans,Noto Sans CJK SC,sans-serif">2</text><text x="733.500" y="108.500" font-size="4.500" fill="#8c8c8c" font-family="Liberation Sans,Noto Sans CJK SC,sans-serif">3</text><polygon points="753.5,101.0 759.5,101.0 756.5,104.5" fill="#a9a9a9"/><path d="M774 97.500h10.500M774 102h10.500M774 106.500h10.500" stroke="#8c8c8c" stroke-width="1.200"/><path d="M770.500 97.500h1.500M770.500 102h1.500M770.500 106.500h1.500" stroke="#8c8c8c" stroke-width="1.200"/><polygon points="789.5,101.0 795.5,101.0 792.5,104.5" fill="#a9a9a9"/><rect x="802.500" y="91.500" width="21" height="21" rx="2" fill="#fffdf8" stroke="#e4b86e" stroke-width="1"/><polygon points="806.300,97.500 806.300,106.500 812,102" fill="#8c8c8c"/><text x="816" y="107" font-size="12" font-weight="bold" text-anchor="middle" fill="#8c8c8c" font-family="Liberation Sans,Noto Sans CJK SC,sans-serif">¶</text><polygon points="847.300,97.500 847.300,106.500 841.600,102" fill="#8c8c8c"/><g transform="translate(1676 0) scale(-1 1)"><text x="838" y="107" font-size="12" font-weight="bold" text-anchor="middle" fill="#8c8c8c" font-family="Liberation Sans,Noto Sans CJK SC,sans-serif">¶</text></g><path d="M862.500 96.500v3q9.500 0 9.500 7.500q-2.500-4-9.500-4v3l-6.500-4.700z" fill="#8c8c8c"/><path d="M893.500 96.500v3q-9.500 0-9.500 7.500q2.500-4 9.500-4v3l6.500-4.700z" fill="#8c8c8c"/><circle cx="917" cy="101" r="5.600" fill="#fff" stroke="#8c8c8c" stroke-width="1.100"/><text x="917" y="103.800" font-size="8.500" text-anchor="middle" fill="#8c8c8c" font-family="Liberation Sans,Noto Sans CJK SC,sans-serif">a</text><path d="M921 105.500l4 4" stroke="#8c8c8c" stroke-width="2"/><polygon points="1016.500,96.500 1016.500,102 1011,96.500" fill="#8c8c8c"/><polygon points="1005,108 1005,102.500 1010.500,108" fill="#8c8c8c"/><path d="M1014.500 98.500l-7.500 7.500" stroke="#8c8c8c" stroke-width="2"/><path d="M524 117.500h500" stroke="#d4d4d4" stroke-width="1"/></svg>

<div class="abs" style="left:547px;top:166px;width:454px;height:98px;background:#fff;border-radius:9px;box-shadow:0 2px 7px rgba(0,0,0,.13)"></div>
<svg class="abs" style="left:570px;top:195px" width="50" height="40" viewBox="0 0 50 40"><g transform="translate(2.500,2.500) scale(0.942,0.919) translate(-22,-3.200)"><polygon points="22,9.500 27,6 27,38.500 24.500,40 22,41.500" fill="#1a9fe0"/><polygon points="22,9.500 27,6 27,11.500 22,13.500" fill="#f7d21d"/>
  <polygon points="34.500,5.500 38,3.200 48.500,8 48.500,10.500 44,11 34.500,6.500" fill="#ec5a1f"/>
  <polygon points="43.500,10.800 48.700,9 48.700,36.500 43.500,35" fill="#96bd45"/>
  <polygon points="34,16.500 38,14 44,17 44,26.500 34,22.500" fill="#f49a3a"/><polygon points="38,14 44,17 44,21 36,17.500 36,15.300" fill="#f7d21d"/>
  <polygon points="34.500,31.500 39,30.500 44.500,33.500 44.500,38 43,38" fill="#1a9fe0"/>
  <polygon points="44,33 48.700,34 48.700,36.500 45,37.500" fill="#1f7a2a"/>
  <polygon points="60,6.200 63,6 69.500,10 67,12.500 63,12.800 60,10" fill="#96bd45"/>
  <polygon points="55.500,8 60,7 60.200,17 55.500,18.500" fill="#ec5a1f"/><polygon points="56.500,7.500 60,6.200 60,10 56.500,10" fill="#c9281c"/>
  <polygon points="55.500,18.500 60,16.500 70,22 70,24.500 65,24.500" fill="#f49a3a"/>
  <polygon points="65,24 70,22 70,33.500 65,35" fill="#ec5a1f"/>
  <polygon points="65,35 70,33 70,39.500 65,41.500" fill="#e3281e"/>
  <polygon points="55.500,34.500 65,35.500 65,41.500 55.500,37" fill="#1a9fe0"/>
  <polygon points="60,28 65,30.500 65,35.500 59,33.500" fill="#f7d21d"/>
  <polygon points="55.500,31.500 59.500,29 60,33.500 55.500,34.800" fill="#2a9a3a"/></g></svg>
<div class="abs" style="left:643px;top:185.500px;font-size:16px;line-height:22px;color:#000;white-space:nowrap">心情说说</div>
<div class="abs" style="left:643px;top:211.500px;font-size:13px;line-height:20px;color:#a9a9a9;white-space:nowrap">这里有你的故事</div>
<div class="abs" style="left:934px;top:201px;width:57px;height:33px;border:1px solid #5fb760;border-radius:5px;color:#3f9f45;font-size:15px;line-height:31px;text-align:center">关注</div>
<div class="abs" style="left:655.500px;top:278.500px;width:84px;height:84px;border-radius:50%;background:radial-gradient(circle closest-side,#fffdb0 0,#fffdb0 84%,rgba(255,253,176,.55) 93%,rgba(255,253,176,0) 100%)"></div>
<svg class="abs" style="left:694px;top:308px" width="14" height="30" viewBox="694 308 14 30"><path d="M695 310.700h4.500M701.500 310.700h4.500M695 334.800h4.500M701.500 334.800h4.500" stroke="#111" stroke-width="1.700" fill="none"/><path d="M700.500 311v23.500M699 311.500h3M699 334h3" stroke="#111" stroke-width="1.500" fill="none"/></svg>
<div id="edbot" class="abs"></div>
<div class="abs" style="left:524px;top:641px;width:118px;height:24px;background:#f9f9f9;border:1px solid #e4e4e4;border-bottom:none"></div>
<div class="abs" style="left:646px;top:641px;width:119px;height:24px;background:#f9f9f9;border:1px solid #e4e4e4;border-bottom:none"></div>
<svg class="abs" style="left:534px;top:646px" width="17" height="17" viewBox="0 0 17 17"><path d="M15.800 .8c-3.500 1-7.500 5-9.500 8l2.400 2.400c3-2 7.200-6.400 7.800-9.700z" fill="#444"/><path d="M5.500 9.800c-3 0-2.800 3.500-5 4.800 3.500 2 8.200 0 7.500-3z" fill="#444"/></svg>
<div class="abs" style="left:556px;top:646px;font-size:16px;line-height:20px;color:#444;white-space:nowrap">使用签名</div>
<div class="abs" style="left:623px;top:655px;width:0;height:0;border-left:4px solid transparent;border-right:4px solid transparent;border-bottom:4px solid #444"></div>
<svg class="abs" style="left:657px;top:648px" width="13" height="13" viewBox="0 0 13 13"><path d="M0 0h6v6h-6zM7 0h6v6h-6zM0 7h6v6h-6z" fill="#444"/><path d="M1.500 1.500h3v3h-3zM8.500 1.500h3v3h-3zM1.500 8.500h3v3h-3z" fill="#f9f9f9"/><path d="M7 7h3v2h3v4h-2v-2h-2v2h-2z" fill="#444"/></svg>
<div class="abs" style="left:674px;top:646px;font-size:16px;line-height:20px;color:#444;white-space:nowrap">设计二维码</div>
<div class="rb" style="top:246px;">微信复制</div>
<div class="rb" style="top:280px;">外网复制</div>
<div class="rb" style="top:314px;">保存文章</div>
<div class="rb" style="top:348px;">导入文章</div>
<div class="rb" style="top:382px;letter-spacing:-0.6px;">清空/新建</div>
<div class="rb" style="top:416px;">手机预览</div>
<div class="rb" style="top:450px;">云端草稿</div>
<div class="rb" style="top:484px;">更多功能</div>

<div id="cp" class="abs"><div class="abs" style="left:0;top:0;width:99px;height:31px;background:#5a4e48"></div>
<div class="abs" style="left:-1.500px;top:4.500px;width:99px;text-align:center;color:#fff;font-size:15px;line-height:21px">配色方案</div>
<div class="abs" style="left:5px;top:41px;width:89px;height:24px;border-radius:5px;background:#ef7060"></div>
<svg class="abs" style="left:9.500px;top:47px" width="15" height="15" viewBox="0 0 15 15"><circle cx="7.500" cy="7.500" r="6.800" fill="#fff"/><path d="M7.500 3.800v7.400M3.800 7.500h7.400" stroke="#e2483c" stroke-width="2.200"/></svg>
<div class="abs" style="left:30px;top:47.200px;font-size:12px;line-height:15px;color:#3a2a28;letter-spacing:.1px">#EF7060</div>
<div class="cb" style="left:17px;top:76px;background:#e3e3e3;border-color:#f4f4f4"></div>
<div class="abs" style="left:33px;top:73px;font-size:12px;font-weight:bold;line-height:18px;color:#fff;white-space:nowrap">全文换色</div>
<div class="sw" style="left:7px;top:93px;background:#e9afb0"></div><div class="sw" style="left:51px;top:93px;background:#141210"></div><div class="sw" style="left:7px;top:117px;background:#fbf7de"></div><div class="sw" style="left:29px;top:117px;background:#f8f7f5"></div><div class="sw" style="left:51px;top:117px;background:#ffff00"></div><div class="sw" style="left:73px;top:117px;background:#808010"></div><div class="sw" style="left:7px;top:141px;background:#bfbfbf"></div><div class="sw" style="left:29px;top:141px;background:#7f8486"></div><div class="sw" style="left:51px;top:141px;background:#ff0000"></div><div class="sw" style="left:73px;top:141px;background:#dcc9bc"></div><div class="sw" style="left:7px;top:165px;background:#1e8c6a"></div><div class="sw" style="left:51px;top:165px;background:#ffffff"></div><div class="sw" style="left:73px;top:165px;background:#e4e4e4"></div><div class="sw" style="left:7px;top:189px;background:#6c6e74"></div>
<div class="abs" style="left:5px;top:212px;width:89px;border-top:1px solid #9a8f8a"></div>
<div class="sw" style="left:7px;top:218px;background:#a9201a"></div><div class="sw" style="left:29px;top:218px;background:#d9281e"></div><div class="sw" style="left:51px;top:218px;background:#ef7060"></div><div class="sw" style="left:73px;top:218px;background:#fddcd2"></div><div class="sw" style="left:7px;top:242px;background:#d92820"></div><div class="sw" style="left:29px;top:242px;background:#ea6c9c"></div><div class="sw" style="left:51px;top:242px;background:#f4b6cd"></div><div class="sw" style="left:73px;top:242px;background:#f1f1f1"></div><div class="sw" style="left:7px;top:266px;background:#ea5a16"></div><div class="sw" style="left:29px;top:266px;background:#f0913a"></div><div class="sw" style="left:51px;top:266px;background:#fbb62a"></div><div class="sw" style="left:73px;top:266px;background:#fde9a6"></div><div class="sw" style="left:7px;top:290px;background:#0f8a1c"></div><div class="sw" style="left:29px;top:290px;background:#8cb83a"></div><div class="sw" style="left:51px;top:290px;background:#c1c725"></div><div class="sw" style="left:73px;top:290px;background:#e4dcc6"></div><div class="sw" style="left:7px;top:314px;background:#5360a4"></div><div class="sw" style="left:29px;top:314px;background:#2b9de4"></div><div class="sw" style="left:51px;top:314px;background:#5abcf2"></div><div class="sw" style="left:73px;top:314px;background:#b5e6f8"></div><div class="sw" style="left:7px;top:338px;background:#8a4ec0"></div><div class="sw" style="left:29px;top:338px;background:#a45bcc"></div><div class="sw" style="left:51px;top:338px;background:#c49fe2"></div><div class="sw" style="left:73px;top:338px;background:#c08c6c"></div><div class="sw" style="left:7px;top:362px;background:#141210"></div><div class="sw" style="left:29px;top:362px;background:#6c6e72"></div><div class="sw" style="left:51px;top:362px;background:#c6c7c6"></div><div class="sw" style="left:73px;top:362px;background:#f4f4f4"></div>
<svg class="abs" style="left:15px;top:390px" width="10" height="10" viewBox="0 0 10 10"><path d="M1 1l4 3.500 4-3.500M1 5l4 3.500 4-3.500" fill="none" stroke="#fff" stroke-width="1.500"/></svg>
<div class="abs" style="left:28px;top:386px;font-size:14px;font-weight:500;line-height:18px;color:#fff;white-space:nowrap">更多配色</div>
<div class="abs" style="left:0;top:413px;width:99px;height:31px;background:#5a4e48"></div>
<div class="abs" style="left:-1.500px;top:418px;width:99px;text-align:center;color:#fff;font-size:15px;line-height:21px">特色功能</div>
</div>
<div class="abs" style="left:78px;top:247px;width:25px;height:12px;background:#f08a3c;border-radius:2px;color:#fff;font-size:10.500px;line-height:10px;text-align:center;font-weight:bold;z-index:5">new</div>
<div class="abs" style="left:74px;top:252px;width:0;height:0;border-right:5px solid #f08a3c;border-top:2px solid transparent;border-bottom:5px solid transparent;z-index:5"></div>
</body>
</html>
